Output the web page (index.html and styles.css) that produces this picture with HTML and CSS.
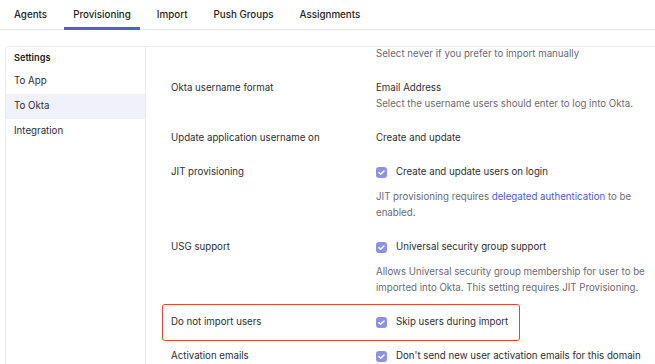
FILE: index.html
```html
<!DOCTYPE html>
<html lang="en">
<head>
  <meta charset="UTF-8" />
  <meta name="viewport" content="width=device-width, initial-scale=1.0" />
  <title>Provisioning</title>
  <link rel="stylesheet" href="styles.css">
</head>
<body>
  <div class="tabs">
    <a href="#" class="tab">Agents</a>
    <a href="#" class="tab active">Provisioning</a>
    <a href="#" class="tab">Import</a>
    <a href="#" class="tab">Push Groups</a>
    <a href="#" class="tab">Assignments</a>
  </div>

  <div class="panel">
    <div class="sidebar">
      <div class="sidebar-title">Settings</div>
      <a href="#">To App</a>
      <a href="#" class="selected">To Okta</a>
      <a href="#">Integration</a>
    </div>

    <div class="main">
      <div class="row first">
        <div class="label"></div>
        <div class="value">
          <p class="desc">Select never if you prefer to import manually</p>
        </div>
      </div>

      <div class="row">
        <div class="label">Okta username format</div>
        <div class="value">
          <div>Email Address</div>
          <p class="desc tight">Select the username users should enter to log into Okta.</p>
        </div>
      </div>

      <div class="row">
        <div class="label">Update application username on</div>
        <div class="value">Create and update</div>
      </div>

      <div class="row">
        <div class="label">JIT provisioning</div>
        <div class="value">
          <label class="check"><span class="box"></span>Create and update users on login</label>
          <p class="desc">JIT provisioning requires <a href="#">delegated authentication</a> to be enabled.</p>
        </div>
      </div>

      <div class="row">
        <div class="label">USG support</div>
        <div class="value">
          <label class="check"><span class="box"></span>Universal security group support</label>
          <p class="desc">Allows Universal security group membership for user to be imported into Okta. This setting requires JIT Provisioning.</p>
        </div>
      </div>

      <div class="row highlight">
        <div class="label">Do not import users</div>
        <div class="value">
          <label class="check"><span class="box"></span>Skip users during import</label>
        </div>
      </div>

      <div class="row">
        <div class="label">Activation emails</div>
        <div class="value">
          <label class="check"><span class="box"></span>Don't send new user activation emails for this domain</label>
        </div>
      </div>
    </div>
  </div>
</body>
</html>
```

FILE: styles.css
```css
* {
  box-sizing: border-box;
}
body {
  font-family: Inter, 'Noto Sans', sans-serif;
  font-size: 9.7px;
  line-height: 16px;
  margin: 0;
  padding: 0;
  background: #fff;
  color: #2e2e34;
  overflow: hidden;
}
a {
  text-decoration: none;
  color: inherit;
}

/* tabs */
.tabs {
  display: flex;
  gap: 8px;
  padding-left: 5px;
  height: 30px;
  border-bottom: 1px solid #e6e6e8;
}
.tab {
  padding: 7px 9px 0;
  font-size: 9.8px;
  font-weight: 500;
  color: #1d1d21;
  border-bottom: 3px solid transparent;
  margin-bottom: -1px;
}
.tab.active {
  border-bottom-color: #4c5fdb;
}

/* panel */
.panel {
  display: flex;
  margin: 16px -20px 0 5px;
  border: 1px solid #ebebed;
  border-radius: 4px 0 0 0;
  height: 340px;
}
.sidebar {
  width: 140px;
  flex-shrink: 0;
  border-right: 1px solid #ebebed;
}
.sidebar-title {
  padding: 3px 8px 0;
  height: 22px;
  font-size: 9.2px;
  font-weight: 600;
  color: #1d1d21;
}
.sidebar a {
  display: block;
  height: 25px;
  padding: 4px 8px;
  color: #2e2e34;
}
.sidebar a.selected {
  background: #f1f1fa;
}

/* settings rows */
.main {
  flex: 1;
  padding-left: 25px;
}
.row {
  display: flex;
  padding: 9px 0;
  position: relative;
}
.row.first {
  padding-top: 0;
  margin-top: -1px;
}
.label {
  width: 205px;
  flex-shrink: 0;
}
.value {
  width: 280px;
}
.desc {
  margin: 9px 0 0;
  color: #6b6b74;
}
.row.first .desc,
.desc.tight {
  margin-top: 0;
}
.desc a {
  color: #4b5bd6;
}
.check {
  display: flex;
  align-items: center;
  white-space: nowrap;
}
.box {
  width: 11px;
  height: 11px;
  margin-right: 9px;
  border-radius: 3px;
  background: #8d91e3 url("data:image/svg+xml,%3Csvg xmlns='http://www.w3.org/2000/svg' viewBox='0 0 11 11'%3E%3Cpath d='M3 5.6l1.7 1.7L8 4' fill='none' stroke='%23fff' stroke-width='1.5' stroke-linecap='round' stroke-linejoin='round'/%3E%3C/svg%3E") center/11px no-repeat;
}
.row.highlight::after {
  content: "";
  position: absolute;
  left: -9px;
  top: -1px;
  width: 356px;
  height: 35px;
  border: 1.5px solid #e5452d;
  border-radius: 3px;
}
```
